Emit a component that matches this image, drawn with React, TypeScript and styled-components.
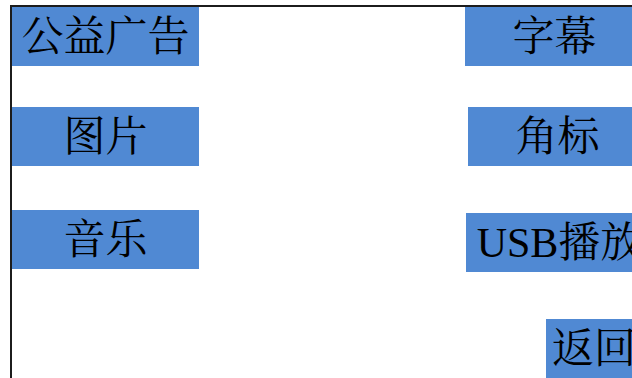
import React from "react";
import styled, { createGlobalStyle } from "styled-components";

const GlobalStyle = createGlobalStyle`
    html, body {
        margin: 0;
        padding: 0;
        background: #ffffff;
        overflow: hidden;
    }
    body {
        font-family: "Liberation Serif", "Noto Serif CJK SC", "Noto Sans CJK SC", serif;
    }
`;

// the screen is wider than the window, so its right side is cut off
const Frame = styled.div`
    display: flex;
    flex-direction: row;
    gap: 266px;
    width: calc(100vw - 10px);
    height: calc(100vh - 5px);
    margin: 5px 0 0 10px;
    border-top: 2px solid #1c1c1c;
    border-left: 2px solid #1c1c1c;
    box-sizing: border-box;
    overflow: hidden;
`;

const Column = styled.div`
    display: flex;
    flex-direction: column;
    align-items: flex-start;
    flex-shrink: 0;
`;

const MenuButton = styled.div<{ $mt?: number; $ml?: number; $w?: number }>`
    display: flex;
    align-items: center;
    justify-content: center;
    width: ${(p) => p.$w ?? 187}px;
    height: 59px;
    margin-top: ${(p) => p.$mt ?? 0}px;
    margin-left: ${(p) => p.$ml ?? 0}px;
    background: #5089d3;
    color: #000000;
    font-size: 42px;
    line-height: 1;
    white-space: nowrap;
    flex-shrink: 0;
`;

export default function App() {
    return (
        <>
            <GlobalStyle />
            <Frame>
                <Column>
                    <MenuButton>公益广告</MenuButton>
                    <MenuButton $mt={41}>图片</MenuButton>
                    <MenuButton $mt={44}>音乐</MenuButton>
                </Column>
                <Column>
                    <MenuButton $w={179}>字幕</MenuButton>
                    <MenuButton $mt={41} $ml={3} $w={179}>角标</MenuButton>
                    <MenuButton $mt={47} $ml={1}>USB播放</MenuButton>
                    <MenuButton $mt={47} $ml={81} $w={96}>返回</MenuButton>
                </Column>
            </Frame>
        </>
    );
}
